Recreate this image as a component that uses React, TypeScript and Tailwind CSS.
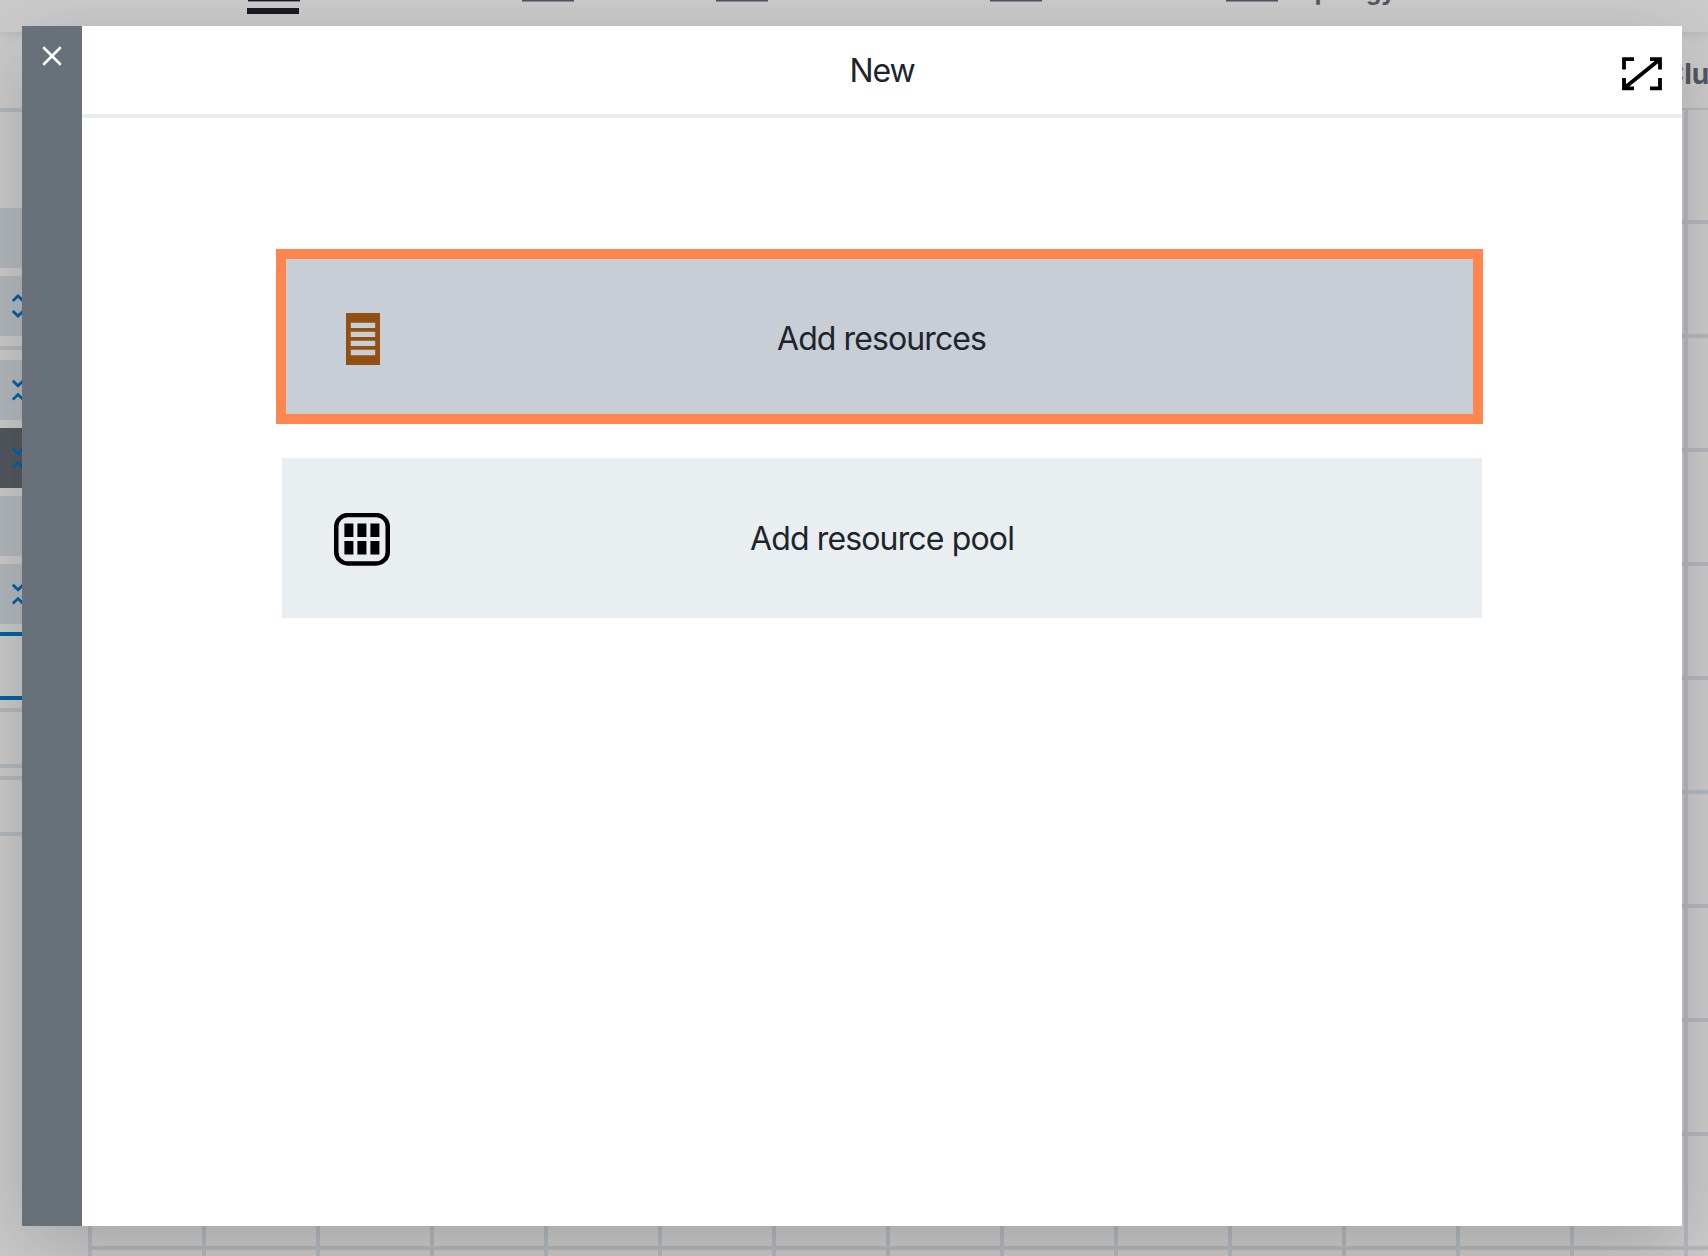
import React from "react";

function Chevrons({ kind }: { kind: "expand" | "collapse" }) {
  return (
    <svg
      className="ml-3 h-6 w-3 text-[#007ccb]"
      viewBox="0 0 12 24"
      fill="none"
      stroke="currentColor"
      strokeWidth="2.8"
    >
      {kind === "expand" ? (
        <path d="M0.8 7 L6 2 L11.2 7 M0.8 17 L6 22 L11.2 17" />
      ) : (
        <path d="M0.8 2.8 L6 7.8 L11.2 2.8 M0.8 21.6 L6 16.6 L11.2 21.6" />
      )}
    </svg>
  );
}

const tabs = [
  { label: "Guests", className: "ml-[248px] w-[274px]", active: true },
  { label: "Guests", className: "w-[194px]" },
  { label: "Environments", className: "w-[274px]" },
  { label: "", className: "w-[236px]" },
  { label: "Topology View", className: "w-[300px]" },
];

function TopBar() {
  return (
    <header className="relative z-10 flex h-8 shrink-0 bg-white shadow-[0_2px_12px_rgba(0,0,0,0.12)]">
      {tabs.map((tab, i) => (
        <div key={i} className={`flex shrink-0 flex-col ${tab.className}`}>
          <div className="flex h-2 items-start">
            <div
              className={`h-[2px] w-[52px] shrink-0 border-b ${
                tab.active ? "border-[#a5a0ae] bg-[#1c202e]" : "border-[#b4b0bd] bg-[#636b78]"
              }`}
            />
            <span className="-mt-[24px] ml-2 text-[24px] leading-[32px] font-bold whitespace-nowrap text-[#687079]">
              {tab.label}
            </span>
          </div>
          {tab.active && <div className="-ml-px h-[6px] w-[52px] shrink-0 bg-[#1e242c]" />}
        </div>
      ))}
    </header>
  );
}

function SideList() {
  return (
    <div className="flex w-[88px] shrink-0 flex-col pt-24">
      <div className="h-[60px] bg-[#e3e9ee]" />
      <div className="mt-2 flex h-[60px] items-center bg-[#e3e9ee]">
        <Chevrons kind="expand" />
      </div>
      <div className="mt-[10px] h-1 bg-[#e3e9ee]" />
      <div className="mt-[10px] flex h-[60px] items-center bg-[#e3e9ee]">
        <Chevrons kind="collapse" />
      </div>
      <div className="mt-2 flex h-[60px] items-center bg-[#687079]">
        <Chevrons kind="collapse" />
      </div>
      <div className="mt-2 h-[60px] bg-[#e3e9ee]" />
      <div className="mt-2 flex h-[60px] items-center bg-[#e3e9ee]">
        <Chevrons kind="collapse" />
      </div>
      <div className="mt-2 h-[68px] border-y-4 border-[#007ccb]" />
      <div className="mt-2 h-[60px] border-y-4 border-[#e3e9ee]" />
      <div className="mt-2 h-[60px] border-y-4 border-[#e3e9ee]" />
    </div>
  );
}

function GridCanvas() {
  return (
    <div className="-mt-[2px] grid shrink-0 auto-rows-[114px] grid-cols-[repeat(15,114px)] bg-white">
      {Array.from({ length: 165 }, (_, i) => (
        <div key={i} className="border-b-4 border-l-4 border-[#e2e9ee]" />
      ))}
    </div>
  );
}

function ResourceIcon() {
  return (
    <svg className="h-[52px] w-[34px]" viewBox="0 0 34 52">
      <path
        fill="#914f12"
        fillRule="evenodd"
        d="M0 0H34V52H0Z M4.8 9.8V15H29.2V9.8Z M4.8 18.8V24H29.2V18.8Z M4.8 27.8V33H29.2V27.8Z M4.8 36.8V42.2H29.2V36.8Z"
      />
    </svg>
  );
}

function PoolIcon() {
  return (
    <svg className="h-[53px] w-14" viewBox="0 0 56 53">
      <rect x="2.25" y="2.1" width="51.5" height="48.3" rx="11.5" fill="none" stroke="#000" strokeWidth="4.5" />
      <path
        fill="#000"
        d="M10.4 10.4h9v13.6h-9z M23.4 10.4h9v13.6h-9z M36.4 10.4h9v13.6h-9z M10.4 28h9v13.6h-9z M23.4 28h9v13.6h-9z M36.4 28h9v13.6h-9z"
      />
    </svg>
  );
}

function Dialog() {
  return (
    <div className="absolute top-[26px] left-[22px] z-20 flex h-[1200px] w-[1660px] bg-white shadow-[0_22px_76px_rgba(0,0,0,0.2)]">
      <button className="flex w-[60px] shrink-0 justify-center bg-[#687079] pt-5" aria-label="Close">
        <svg className="size-5" viewBox="0 0 20 20" stroke="#fff" strokeWidth="2.6" strokeLinecap="round">
          <path d="M2 2 L18 18 M18 2 L2 18" />
        </svg>
      </button>
      <div className="flex grow flex-col">
        <div className="grid h-[92px] grid-cols-[1fr_auto_1fr] border-b-4 border-[#e9eff1]">
          <h1 className="col-start-2 mt-[25px] text-[32px] leading-[40px] tracking-[-1.1px]">New</h1>
          <svg
            className="mt-[31px] mr-5 h-[34px] w-10 justify-self-end"
            viewBox="0 0 40 34"
            fill="none"
            stroke="#000"
            strokeWidth="3.8"
          >
            <path d="M12 2.2H2V12.5 M28 2.2H38V12.5 M2 21V31.3H12 M38 21V31.3H28 M3 30.5L37 3" />
            <path d="M31 2H38V8Z M2 25V31.5H9Z" fill="#000" stroke="none" />
          </svg>
        </div>
        <div className="flex flex-col pt-[131px] pl-[194px]">
          <button className="grid h-[175px] w-[1207px] grid-cols-[1fr_auto_1fr] items-center border-10 border-[#ff874f] bg-[#c8ced6] pb-[1px]">
            <span className="ml-[60px] pt-[5px]">
              <ResourceIcon />
            </span>
            <span className="ml-[4px] pt-[6px] text-[32px] leading-[40px] tracking-[-0.9px]">Add resources</span>
          </button>
          <button className="mt-[34px] ml-[6px] grid h-40 w-[1200px] grid-cols-[1fr_auto_1fr] items-center bg-[#e9eff1]">
            <span className="ml-[52px] pt-[2px]">
              <PoolIcon />
            </span>
            <span className="pt-[2px] text-[32px] leading-[40px] tracking-[-0.85px]">Add resource pool</span>
          </button>
        </div>
      </div>
    </div>
  );
}

export default function App() {
  return (
    <div className="relative flex h-[1256px] w-full flex-col overflow-hidden bg-white font-[Inter,sans-serif] text-[#1e242c]">
      <TopBar />
      <div className="flex h-[80px] shrink-0 items-center justify-end border-b-4 border-[#e3e9ee]">
        <span className="-mr-[55px] pt-2 text-[28px] leading-[36px] font-bold text-[#687079]">Cluster</span>
      </div>
      <div className="flex min-h-0 grow">
        <SideList />
        <GridCanvas />
      </div>
      <div className="absolute inset-0 z-10 bg-black/20" />
      <Dialog />
    </div>
  );
}
